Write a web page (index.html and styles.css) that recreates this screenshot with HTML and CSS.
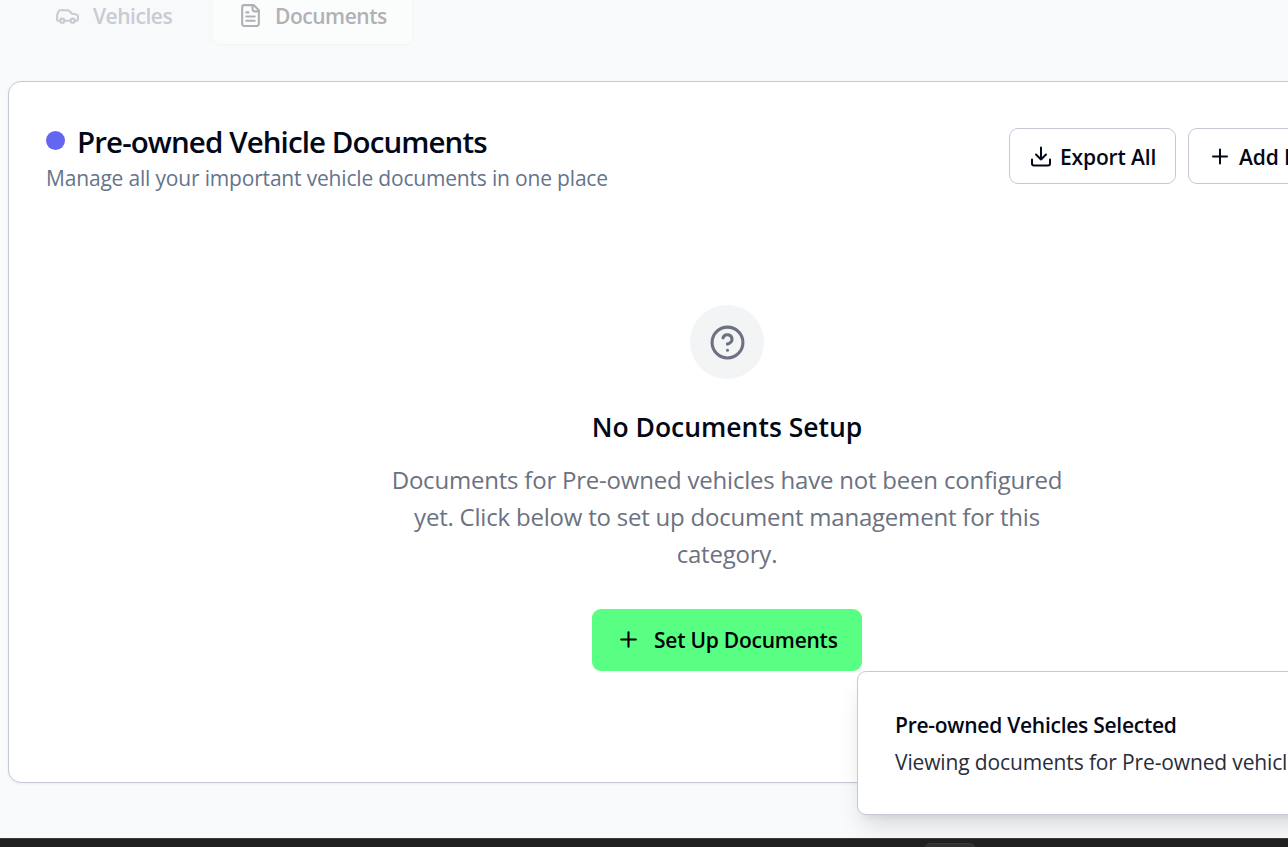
FILE: index.html
```html
<!DOCTYPE html>
<html lang="en">
<head>
<meta charset="utf-8">
<title>Vehicle Documents</title>
<link rel="stylesheet" href="styles.css">
</head>
<body>
<div class="page">
  <nav class="tabs">
    <div class="tab tab-vehicles">
      <svg class="icon" viewBox="0 0 24 24"><path d="M19 17h2c.6 0 1-.4 1-1v-3c0-.9-.7-1.7-1.5-1.9C18.700 10.600 16 10 16 10s-1.300-1.400-2.200-2.300c-.5-.4-1.100-.7-1.800-.7H5c-.6 0-1.100.4-1.400.9l-1.400 2.900A3.700 3.700 0 0 0 2 12v4c0 .6.4 1 1 1h2"/><circle cx="7" cy="17" r="2"/><path d="M9 17h6"/><circle cx="17" cy="17" r="2"/></svg>
      <span class="label-vehicles">Vehicles</span>
    </div>
    <div class="tab tab-documents">
      <svg class="icon" viewBox="0 0 24 24"><path d="M15 2H6a2 2 0 0 0-2 2v16a2 2 0 0 0 2 2h12a2 2 0 0 0 2-2V7Z"/><path d="M14 2v4a2 2 0 0 0 2 2h4M10 9H8M16 13H8M16 17H8"/></svg>
      <span class="label-documents">Documents</span>
    </div>
  </nav>
  <main class="card">
    <header class="card-header">
      <div class="heading">
        <div class="title-row"><span class="dot"></span><h1 class="title">Pre-owned Vehicle Documents</h1></div>
        <p class="subtitle">Manage all your important vehicle documents in one place</p>
      </div>
      <div class="actions">
        <button class="outline-button export"><svg class="icon" viewBox="0 0 24 24"><path d="M21 15v4a2 2 0 0 1-2 2H5a2 2 0 0 1-2-2v-4M7 10l5 5 5-5M12 15V3"/></svg><span>Export All</span></button>
        <button class="outline-button add"><svg class="icon" viewBox="0 0 24 24"><path d="M5 12h14M12 5v14"/></svg><span>Add Document</span></button>
      </div>
    </header>
    <section class="empty">
      <div class="empty-icon"><svg viewBox="0 0 24 24"><circle cx="12" cy="12" r="10"/><path d="M9.090 9a3 3 0 0 1 5.830 1c0 2-3 3-3 3M12 17h.01"/></svg></div>
      <h2 class="empty-title">No Documents Setup</h2>
      <p class="empty-text">Documents for Pre-owned vehicles have not been configured<br>yet. Click below to set up document management for this<br>category.</p>
      <button class="setup"><svg class="icon" viewBox="0 0 24 24"><path d="M5 12h14M12 5v14"/></svg><span>Set Up Documents</span></button>
    </section>
  </main>
  <aside class="toast">
    <div class="toast-title">Pre-owned Vehicles Selected</div>
    <div class="toast-text">Viewing documents for Pre-owned vehicles</div>
  </aside>
  <footer class="taskbar"><span class="taskbar-item"></span></footer>
</div>
</body>
</html>
```
FILE: styles.css
```css
* { box-sizing: border-box; }
body { margin: 0; font-family: "Segoe UI", "Open Sans", sans-serif; color: #020817; }
h1, h2, p { margin: 0; }
button { font: inherit; color: inherit; padding: 0; }
svg { fill: none; stroke: currentColor; stroke-width: 2; stroke-linecap: round; stroke-linejoin: round; flex: none; }
.icon { width: 25px; height: 25px; }
.page { position: relative; width: 1288px; height: 847px; overflow: hidden; background: #f8fafc; display: flex; flex-direction: column; white-space: nowrap; }
.tabs { display: flex; height: 45px; width: 406px; margin-left: 8px; flex: none; background: #f8f9fb; border-radius: 0 0 9px 9px; font-size: 21px; font-weight: 600; line-height: 32px; letter-spacing: -.47px; }
.tab { display: flex; height: 44px; }
.tab-vehicles { width: 205px; padding-left: 47px; gap: 13px; color: #c9cbd3; }
.tab-documents { width: 199px; padding-left: 25px; gap: 12px; color: #b0b1b7; background: #fbfdfc; border-radius: 0 0 7px 7px; box-shadow: 0 1px 3px rgba(0,0,0,.03); }
.tab .icon { margin-top: 3px; }
.card { flex: none; width: 1438px; height: 702px; margin: 36px 0 0 8px; border: 1px solid #c5c9d5; border-radius: 13px; background: #fff; box-shadow: 0 1px 3px rgba(15,23,42,.06); }
.card-header { display: flex; justify-content: space-between; padding: 37px 37px 0; }
.heading { padding-top: 4px; }
.title-row { display: flex; align-items: center; height: 38px; gap: 12px; }
.dot { width: 19px; height: 19px; margin-top: -4px; border-radius: 50%; background: #6366f1; }
.title { font-size: 29.500px; font-weight: 600; line-height: 38px; letter-spacing: -.9px; }
.subtitle { font-size: 21px; line-height: 34px; letter-spacing: -.18px; color: #64748b; }
.actions { width: 399px; display: flex; gap: 12px; padding-top: 9px; }
.outline-button { display: flex; align-items: center; gap: 7px; height: 56px; padding-left: 19px; border: 1px solid #c5c9d5; border-radius: 9px; background: #fff; font-size: 21px; font-weight: 600; letter-spacing: -.15px; flex: none; }
.outline-button .icon { width: 24px; }
.outline-button span { padding-top: 2px; }
.export { width: 167px; }
.add { width: 230px; }
.empty { width: 1436px; display: flex; flex-direction: column; align-items: center; padding-top: 110px; }
.empty-icon { width: 74px; height: 74px; display: grid; place-items: center; border-radius: 50%; background: #f3f4f6; color: #6b7280; }
.empty-icon svg { width: 37px; height: 37px; }
.empty-title { margin-top: 27px; font-size: 26.500px; line-height: 43px; font-weight: 600; }
.empty-text { margin-top: 12px; font-size: 24px; line-height: 37px; letter-spacing: -.21px; text-align: center; color: #6b7280; }
.setup { display: flex; align-items: center; gap: 13px; width: 270px; height: 62px; margin-top: 37px; padding-left: 24px; border: 0; border-radius: 9px; background: #58ff82; color: #000; font-size: 21px; font-weight: 600; letter-spacing: -.24px; }
.setup .icon { margin-top: -2px; }
.toast { position: absolute; left: 857px; top: 671px; width: 480px; height: 144px; padding: 36px 37px; border: 1px solid #c5c9d5; border-radius: 9px; background: #fff; box-shadow: 0 15px 23px -5px rgba(0,0,0,.13), 0 6px 9px -6px rgba(0,0,0,.1); }
.toast-title { font-size: 21px; font-weight: 600; line-height: 34px; letter-spacing: -.26px; }
.toast-text { margin-top: 1px; font-size: 21px; line-height: 38px; letter-spacing: -.14px; color: #282d3a; }
.taskbar { position: relative; margin-top: auto; height: 9px; background: #202020; border-top: 1px solid #3a3a3a; overflow: hidden; padding: 4px 0 0 925px; }
.taskbar-item { display: block; width: 50px; height: 20px; border-radius: 5px; background: #303030; border: 1px solid #3a3a3a; }
```
